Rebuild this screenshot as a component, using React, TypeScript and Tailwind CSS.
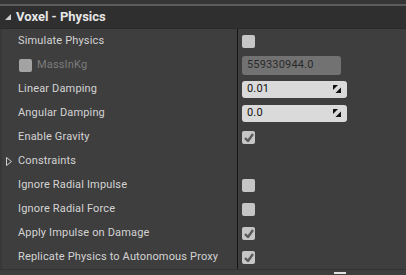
import React from "react";

type Row =
  | { label: string; kind: "check"; checked: boolean }
  | { label: string; kind: "mass" }
  | { label: string; kind: "number"; value: string }
  | { label: string; kind: "group" };

const ROWS: Row[] = [
  { label: "Simulate Physics", kind: "check", checked: false },
  { label: "MassInKg", kind: "mass" },
  { label: "Linear Damping", kind: "number", value: "0.01" },
  { label: "Angular Damping", kind: "number", value: "0.0" },
  { label: "Enable Gravity", kind: "check", checked: true },
  { label: "Constraints", kind: "group" },
  { label: "Ignore Radial Impulse", kind: "check", checked: false },
  { label: "Ignore Radial Force", kind: "check", checked: false },
  { label: "Apply Impulse on Damage", kind: "check", checked: true },
  { label: "Replicate Physics to Autonomous Proxy", kind: "check", checked: true },
];

function Check({ checked, disabled }: { checked: boolean; disabled?: boolean }) {
  return (
    <div className={`w-[13px] h-[13px] rounded-[2px] flex items-center justify-center ${disabled ? "bg-[#a3a3a3]" : "bg-[#c6c6c6]"}`}>
      {checked && (
        <svg width="10" height="9" viewBox="0 0 10 9">
          <path d="M1 5 L4 8 L9 1" fill="none" stroke="#5a5a5a" strokeWidth="2.4" />
        </svg>
      )}
    </div>
  );
}

function SpinIcon() {
  return (
    <svg width="8" height="8" viewBox="0 0 8 8">
      <path d="M0 0 H5 L0 5 Z" fill="#111" />
      <path d="M8 8 H2.5 L8 2.5 Z" fill="#111" />
    </svg>
  );
}

function ValueCell({ row }: { row: Row }) {
  if (row.kind === "check") return <Check checked={row.checked} />;
  if (row.kind === "mass")
    return (
      <div className="w-[99px] h-[19px] rounded-[3px] bg-[#727272] flex items-center px-[5px] text-[11px] text-[#2b2b2b]">
        559330944.0
      </div>
    );
  if (row.kind === "number")
    return (
      <div className="w-[105px] h-[17px] rounded-[3px] bg-[#dadada] flex items-center justify-between pl-[5px] pr-[6px] text-[11px] text-[#111]">
        <span>{row.value}</span>
        <SpinIcon />
      </div>
    );
  return null;
}

function Label({ row }: { row: Row }) {
  if (row.kind === "mass")
    return (
      <div className="flex items-center gap-[5px] pl-[17px]">
        <Check checked={false} disabled />
        <span className="text-[#7c7c7c]">MassInKg</span>
      </div>
    );
  if (row.kind === "group")
    return (
      <div className="flex items-center pl-[4px] gap-[6px]">
        <svg width="6" height="9" viewBox="0 0 6 9">
          <path d="M0.5 0.5 L5.5 4.5 L0.5 8.5 Z" fill="none" stroke="#cfcfcf" strokeWidth="1" />
        </svg>
        <span>{row.label}</span>
      </div>
    );
  return <div className="pl-[16px] whitespace-nowrap">{row.label}</div>;
}

export default function App() {
  return (
    <div className="w-[406px] h-[275px] overflow-hidden bg-[#3e3e3e] text-[#d4d4d4] text-[11px] tracking-[0.16px]" style={{ fontFamily: "Roboto, 'Open Sans', sans-serif" }}>
      <div className="h-[4px] bg-[#353535]" />
      <div className="h-[2px] bg-[#5c5c5c]" />
      <div className="h-[23px] bg-[#2f2f2f] flex items-center gap-[5px] pl-[5px] border-b border-[#2a2a2a]">
        <svg width="6" height="6" viewBox="0 0 6 6">
          <path d="M6 0 V6 H0 Z" fill="#cfcfcf" />
        </svg>
        <span className="text-[13px] font-bold text-[#e6e6e6] tracking-normal">Voxel - Physics</span>
      </div>
      <div className="flex flex-col border-l-[2px] border-[#383838]">
        {ROWS.map((row) => (
          <div key={row.label} className="h-[24px] flex">
            <div className="w-[235px] flex items-center overflow-hidden">
              <Label row={row} />
            </div>
            <div className="w-px bg-[#151515]" />
            <div className="flex-1 flex items-center pl-[4px]">
              <ValueCell row={row} />
            </div>
          </div>
        ))}
      </div>
      <div className="h-px bg-[#333333]" />
      <div className="flex justify-end pr-[60px] pt-[2px]">
        <div className="w-[12px] h-[2px] bg-[#e0e0e0]" />
      </div>
    </div>
  );
}
